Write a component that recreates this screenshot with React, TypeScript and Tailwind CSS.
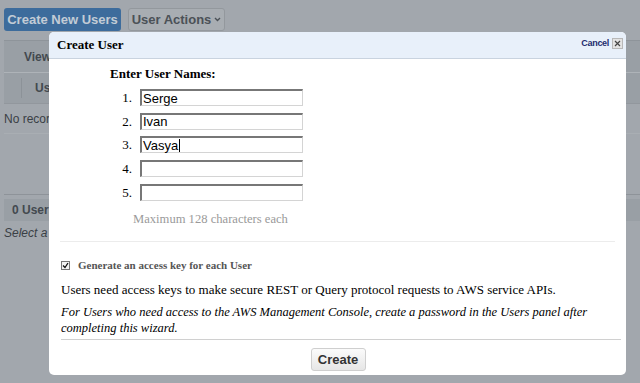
import React from "react";

const serif = { fontFamily: '"Liberation Serif", "Times New Roman", serif' };
const sans = { fontFamily: '"Liberation Sans", Arial, sans-serif' };

function FakeInput({ value, caret }: { value: string; caret?: boolean }) {
  return (
    <div
      className="h-[17px] w-[163px] bg-white border-t-2 border-l-2 border-r border-b border-t-[#777] border-l-[#777] border-r-[#d4d4d4] border-b-[#d4d4d4] flex items-center pl-[1px] text-[13px] leading-none text-black"
      style={sans}
    >
      <span>{value}</span>
      {caret && <span className="inline-block w-px h-[13px] bg-black ml-[1px]" />}
    </div>
  );
}

export default function App() {
  const names = ["Serge", "Ivan", "Vasya", "", ""];
  return (
    <div className="relative w-[640px] h-[383px] overflow-hidden bg-[#a2a7ad]" style={sans}>
      {/* Background page */}
      <div className="flex flex-col">
        <div className="flex gap-[7px] pt-[8px] pl-[4px]">
          <div className="h-[23px] w-[117px] rounded-[3px] bg-[#3d6c9c] text-[#c3ccd6] text-[13px] font-bold flex items-center justify-center">
            Create New Users
          </div>
          <div className="h-[23px] w-[97px] rounded-[3px] bg-[#a8adb2] border border-[#93989d] text-[#4b5157] text-[13px] font-bold flex items-center justify-center gap-[3px]">
            User Actions
            <svg width="7" height="5" viewBox="0 0 7 5"><path d="M1 1 L3.5 3.5 L6 1" stroke="#4b5157" strokeWidth="1.4" fill="none" /></svg>
          </div>
        </div>
        <div className="mt-[9px] ml-[4px] h-[32px] bg-[#999fa5] border-t border-[#8e949a] flex items-center pl-[20px] text-[12px] font-bold text-[#43494f]">
          Viewing
        </div>
        <div className="ml-[4px] h-[31px] bg-[#999fa5] border-t border-[#aeb3b8] flex items-center text-[12px] font-bold text-[#43494f]">
          <div className="w-[18px] h-[20px] border-r border-[#8c9298]" />
          <span className="ml-[13px]">User Name</span>
        </div>
        <div className="ml-[4px] h-[30px] border-t border-[#92979d] flex items-center text-[12px] text-[#3a4045]">
          No records found
        </div>
        <div className="ml-[4px] h-[62px] border-b border-[#8e9399] border-t border-t-[#a9aeb3]" />
        <div className="mt-[4px] ml-[4px] h-[22px] bg-[#999fa5] flex items-center pl-[8px] text-[12px] font-bold text-[#43494f]">
          0 Users selected
        </div>
        <div className="ml-[4px] mt-[3px] text-[12px] italic text-[#3a4045]">Select a user above</div>
      </div>

      {/* Modal */}
      <div className="absolute left-[49px] top-[32px] w-[577px] h-[343px] bg-white rounded-[5px] flex flex-col overflow-hidden">
        <div className="h-[27px] bg-[#e8f0fa] border-b border-[#c9d3df] flex items-center justify-between pl-[8px] pr-[3px]">
          <span className="text-[13px] font-bold text-black" style={serif}>Create User</span>
          <div className="flex items-center gap-[3px] -mt-[3px]">
            <span className="text-[9px] font-bold text-[#232c6e] tracking-[-0.3px]" style={sans}>Cancel</span>
            <div className="w-[11px] h-[11px] bg-[#e3e3e3] border border-[#b8b8b8] flex items-center justify-center">
              <svg width="7" height="7" viewBox="0 0 7 7"><path d="M1 1 L6 6 M6 1 L1 6" stroke="#444" strokeWidth="1.2" /></svg>
            </div>
          </div>
        </div>

        <div className="flex flex-col" style={serif}>
          <div className="ml-[61px] mt-[7px] text-[13px] font-bold text-black leading-[16px]">Enter User Names:</div>
          <div className="flex flex-col gap-[6.7px] mt-[7px]">
            {names.map((n, i) => (
              <div key={i} className="flex items-center">
                <span className="w-[83px] text-right text-[13px] text-black leading-none">{i + 1}.</span>
                <div className="ml-[8px]">
                  <FakeInput value={n} caret={i === 2} />
                </div>
              </div>
            ))}
          </div>
          <div className="ml-[84px] mt-[10px] text-[12.6px] text-[#9a9a9a] leading-[16px]">Maximum 128 characters each</div>
          <div className="mx-[11px] mt-[14px] h-px bg-[#ececec]" />
          <div className="flex items-center ml-[12px] mt-[18px]">
            <div className="w-[9px] h-[9px] border border-[#777] bg-[#f4f4f4] flex items-center justify-center">
              <svg width="7" height="7" viewBox="0 0 7 7"><path d="M1 3.5 L3 5.5 L6 1" stroke="#111" strokeWidth="1.3" fill="none" /></svg>
            </div>
            <span className="ml-[8px] text-[11px] font-bold text-[#555] leading-none">Generate an access key for each User</span>
          </div>
          <div className="ml-[12px] mt-[11px] text-[13px] text-black leading-[16px]">
            Users need access keys to make secure REST or Query protocol requests to AWS service APIs.
          </div>
          <div className="ml-[12px] mt-[6px] text-[12.5px] italic text-black leading-[16px] w-[560px]">
            For Users who need access to the AWS Management Console, create a password in the Users panel after completing this wizard.
          </div>
          <div className="ml-[12px] mr-[5px] mt-[3px] h-px bg-[#d0d0d0]" />
          <div className="flex justify-center mt-[8px] pl-[1px]">
            <div
              className="w-[55px] h-[23px] rounded-[3px] border border-[#cfcfcf] bg-gradient-to-b from-[#fbfbfb] to-[#e6e6e6] flex items-center justify-center text-[13px] font-bold text-[#333]"
              style={sans}
            >
              Create
            </div>
          </div>
        </div>
      </div>
    </div>
  );
}
